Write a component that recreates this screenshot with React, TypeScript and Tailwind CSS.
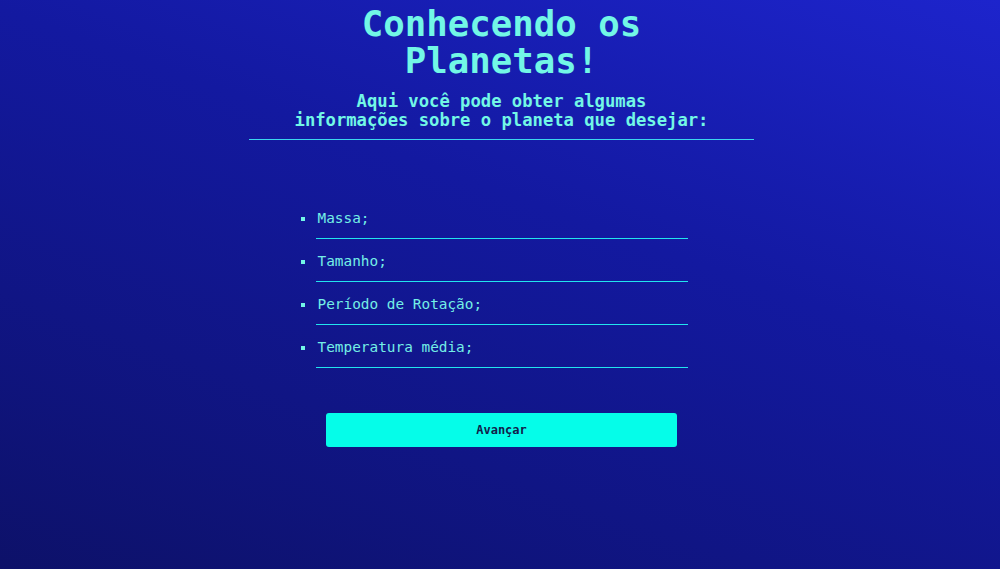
import React from 'react';

const INFO_ITEMS = ['Massa;', 'Tamanho;', 'Período de Rotação;', 'Temperatura média;'];

export default function App() {
    return (
        <div className="min-h-[569px] w-full bg-[linear-gradient(200deg,#1d24cc_0%,#1319a0_40%,#0d1169_100%)] font-['DejaVu_Sans_Mono','Liberation_Mono',monospace] text-[#72f7e6]">
            <div className="flex flex-col items-center pl-[3px]">
                {/* cabeçalho */}
                <header className="flex w-[505px] flex-col items-center border-b border-[#3bd6ee] pt-[5px] pb-[9px]">
                    <h1 className="text-center text-[35.7px] leading-[37px] font-bold">
                        Conhecendo os
                        <br />
                        Planetas!
                    </h1>
                    <h2 className="mt-[13px] text-center text-[17.2px] leading-[19px] font-bold">
                        Aqui você pode obter algumas
                        <br />
                        informações sobre o planeta que desejar:
                    </h2>
                </header>

                {/* lista de informações */}
                <ul className="mt-[56px] w-[372px] list-[square] text-[14.4px] leading-[20px] marker:text-[#72f7e6]">
                    {INFO_ITEMS.map((item) => (
                        <li key={item} className="border-b border-[#22e4ee] pt-3 pb-[10px] pl-[2px] text-[#74efe6]">
                            {item}
                        </li>
                    ))}
                </ul>

                <button
                    type="button"
                    className="mt-[45px] h-[34px] w-[351px] rounded-[3px] bg-[#05fde9] text-[12px] font-bold text-[#12204a]"
                >
                    Avançar
                </button>
            </div>
        </div>
    );
}
